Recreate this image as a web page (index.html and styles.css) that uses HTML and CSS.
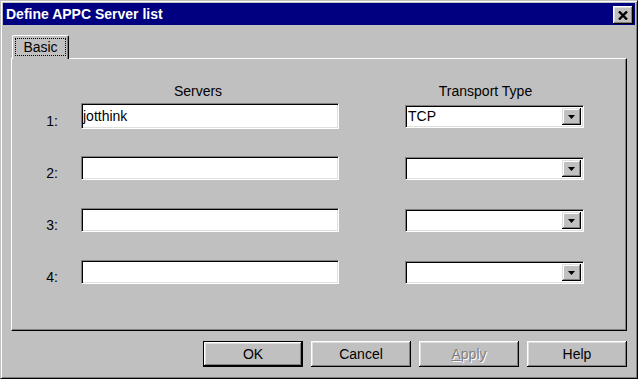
FILE: index.html
```html
<!DOCTYPE html>
<html lang="en">
<head>
    <meta charset="UTF-8">
    <title>Define APPC Server list</title>
    <link rel="stylesheet" href="styles.css">
</head>
<body>

<div class="window">
    <div class="title-bar">
        <span class="title">Define APPC Server list</span>
        <button class="close-button">
            <svg width="10" height="9" viewBox="0 0 10 9"><path d="M1 0.5 L9 8.5 M9 0.5 L1 8.5" stroke="#000" stroke-width="2.4" fill="none"/></svg>
        </button>
    </div>

    <div class="dialog-body">
        <div class="tab-strip">
            <div class="tab"><span class="tab-label">Basic</span></div>
        </div>
        <div class="panel">
            <div class="header-row">
                <div></div>
                <div class="header servers-header">Servers</div>
                <div class="header transport-header">Transport Type</div>
            </div>
            <div class="rows">
                <div class="row-label">1:</div>
                <div class="field first">jotthink</div>
                <div class="combo"><span class="combo-text">TCP</span><span class="combo-button"><svg width="7" height="4" viewBox="0 0 7 4"><path d="M0 0h7L3.5 4z"/></svg></span></div>

                <div class="row-label">2:</div>
                <div class="field"></div>
                <div class="combo"><span class="combo-text"></span><span class="combo-button"><svg width="7" height="4" viewBox="0 0 7 4"><path d="M0 0h7L3.5 4z"/></svg></span></div>

                <div class="row-label">3:</div>
                <div class="field"></div>
                <div class="combo"><span class="combo-text"></span><span class="combo-button"><svg width="7" height="4" viewBox="0 0 7 4"><path d="M0 0h7L3.5 4z"/></svg></span></div>

                <div class="row-label">4:</div>
                <div class="field"></div>
                <div class="combo"><span class="combo-text"></span><span class="combo-button"><svg width="7" height="4" viewBox="0 0 7 4"><path d="M0 0h7L3.5 4z"/></svg></span></div>
            </div>
        </div>
        <div class="button-group">
            <button class="dlg-button default">OK</button>
            <button class="dlg-button">Cancel</button>
            <button class="dlg-button disabled"><u>A</u>pply</button>
            <button class="dlg-button">Help</button>
        </div>
    </div>
</div>

</body>
</html>
```

FILE: styles.css
```css
body {
    margin: 0;
    background-color: #c0c0c0;
    font-family: "Liberation Sans", Arial, sans-serif;
    font-size: 14px;
    color: #000;
}
.window {
    width: 638px;
    height: 379px;
    box-sizing: border-box;
    padding: 2px;
    border: 1px solid;
    border-color: #c0c0c0 #000 #000 #c0c0c0;
    box-shadow: inset 1px 1px #fff, inset -1px -1px #808080;
    background-color: #c0c0c0;
}
.title-bar {
    height: 22px;
    background-color: #000080;
    display: flex;
    align-items: center;
    justify-content: space-between;
    padding-left: 3px;
}
.title {
    color: #fff;
    font-weight: bold;
    font-size: 14px;
}
.close-button {
    width: 20px;
    height: 18px;
    margin-right: 2px;
    margin-top: 2px;
    padding: 0;
    border: none;
    background-color: #c0c0c0;
    box-shadow: inset -1px -1px #000, inset 1px 1px #fff, inset -2px -2px #808080, inset 2px 2px #dfdfdf;
    display: flex;
    align-items: center;
    justify-content: center;
}
.dialog-body {
    padding: 10px 8px 0 8px;
}
.tab-strip {
    display: flex;
    position: relative;
    z-index: 1;
}
.tab {
    width: 57px;
    height: 24px;
    box-sizing: border-box;
    margin-left: 1px;
    margin-bottom: -1px;
    padding: 2px 2px 3px 2px;
    background-color: #c0c0c0;
    border-top: 1px solid #fff;
    border-left: 1px solid #fff;
    border-right: 1px solid #000;
    border-radius: 2px 2px 0 0;
    box-shadow: inset -1px 0 #808080;
}
.tab-label {
    display: block;
    height: 100%;
    box-sizing: border-box;
    border: 1px dotted #000;
    text-align: center;
    line-height: 17px;
}
.panel {
    height: 273px;
    box-sizing: border-box;
    border: 1px solid;
    border-color: #fff #000 #000 #fff;
    box-shadow: inset -1px -1px #808080;
    padding-top: 24px;
}
.header-row {
    display: grid;
    grid-template-columns: 69px 258px 245px;
    line-height: 16px;
}
.servers-header {
    text-align: center;
    padding-right: 24px;
}
.transport-header {
    text-align: center;
    padding-left: 66px;
    padding-right: 18px;
}
.rows {
    display: grid;
    grid-template-columns: 69px 258px 245px;
    grid-auto-rows: 24px;
    row-gap: 28px;
    margin-top: 5px;
}
.row-label {
    text-align: right;
    padding-right: 23px;
    align-self: end;
    line-height: 16px;
    margin-bottom: -1px;
}
.field {
    height: 24px;
    box-sizing: border-box;
    background-color: #fff;
    border: 1px solid;
    border-color: #808080 #fff #fff #808080;
    box-shadow: inset 1px 1px #000, inset -1px -1px #dfdfdf;
    padding: 2px 1px;
    line-height: 18px;
}
.field.first {
    height: 26px;
    margin-top: -1px;
    line-height: 20px;
}
.combo {
    width: 179px;
    height: 23px;
    justify-self: end;
    align-self: end;
    box-sizing: border-box;
    background-color: #fff;
    border: 1px solid;
    border-color: #808080 #fff #fff #808080;
    box-shadow: inset 1px 1px #000, inset -1px -1px #dfdfdf;
    padding: 2px;
    display: flex;
}
.combo-text {
    flex: 1;
    line-height: 17px;
}
.combo-button {
    width: 19px;
    background-color: #c0c0c0;
    box-shadow: inset -1px -1px #000, inset 1px 1px #dfdfdf, inset -2px -2px #808080, inset 2px 2px #fff;
    display: flex;
    align-items: center;
    justify-content: center;
}
.button-group {
    display: flex;
    justify-content: flex-end;
    gap: 8px;
    margin-top: 10px;
}
.dlg-button {
    width: 100px;
    height: 26px;
    padding: 0;
    border: none;
    background-color: #c0c0c0;
    font-family: "Liberation Sans", Arial, sans-serif;
    font-size: 14px;
    color: #000;
    box-shadow: inset -1px -1px #000, inset 1px 1px #fff, inset -2px -2px #808080, inset 2px 2px #dfdfdf;
}
.dlg-button.default {
    border: 1px solid #000;
}
.dlg-button.disabled {
    color: #808080;
    text-shadow: 1px 1px #fff;
}
```
